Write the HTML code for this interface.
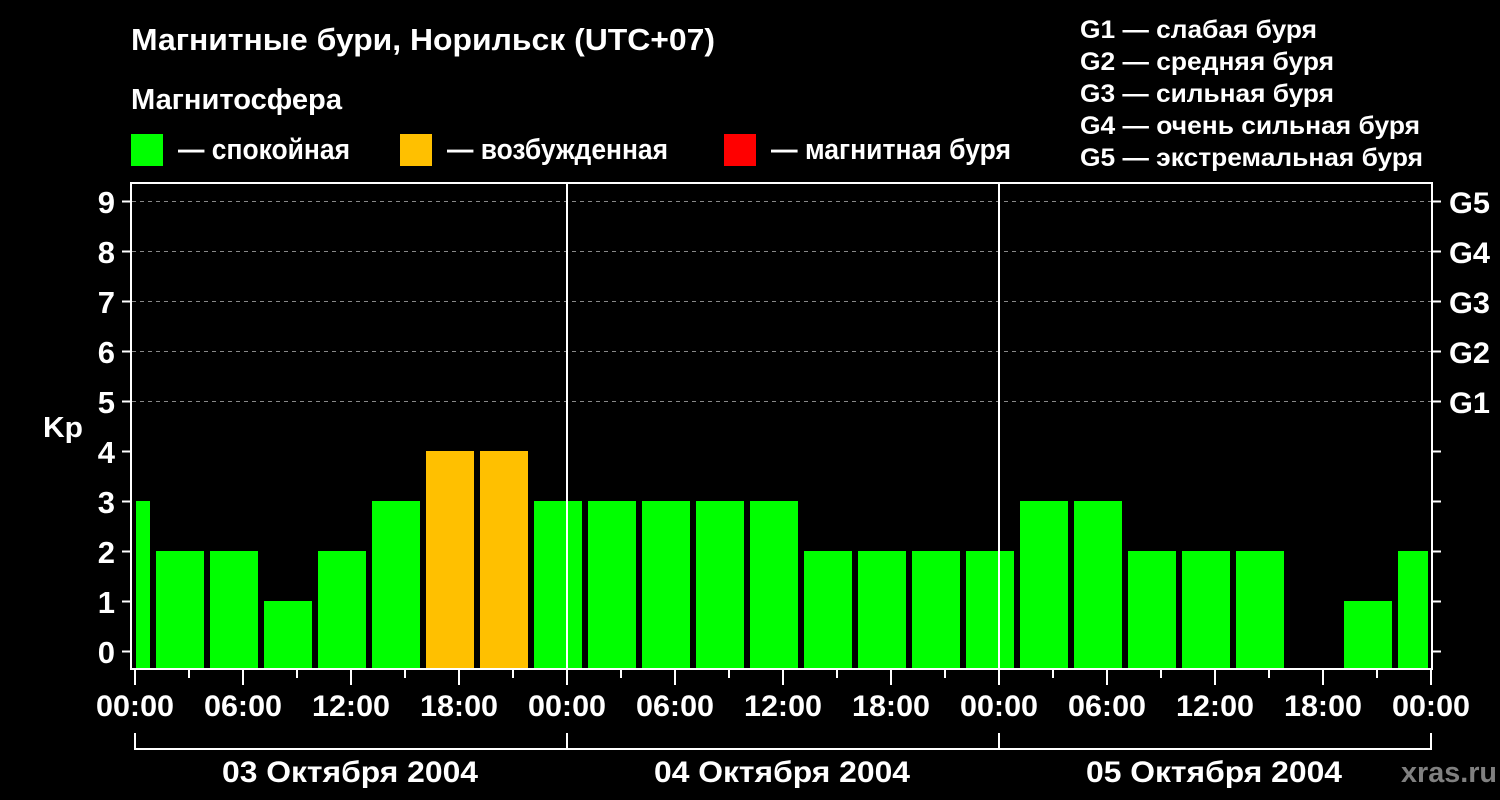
<!DOCTYPE html>
<html><head><meta charset="utf-8"><style>
html,body{margin:0;padding:0;background:#000;}
svg{display:block;}
text{font-family:"Liberation Sans",sans-serif;font-weight:bold;fill:#fff;}
</style></head><body>
<svg width="1500" height="800" viewBox="0 0 1500 800" xmlns="http://www.w3.org/2000/svg">
<rect width="1500" height="800" fill="#000"/>
<text x="131" y="50" font-size="31" textLength="584" lengthAdjust="spacingAndGlyphs">Магнитные бури, Норильск (UTC+07)</text>
<text x="131" y="109" font-size="29" textLength="211" lengthAdjust="spacingAndGlyphs">Магнитосфера</text>
<rect x="131" y="134" width="32" height="32" fill="#00ff00"/>
<rect x="400" y="134" width="32" height="32" fill="#ffc000"/>
<rect x="724" y="134" width="32" height="32" fill="#ff0000"/>
<text x="178" y="159" font-size="29" textLength="172" lengthAdjust="spacingAndGlyphs">— спокойная</text>
<text x="447" y="159" font-size="29" textLength="221" lengthAdjust="spacingAndGlyphs">— возбужденная</text>
<text x="771" y="159" font-size="29" textLength="240" lengthAdjust="spacingAndGlyphs">— магнитная буря</text>
<g font-size="25">
<text x="1080" y="38" textLength="237" lengthAdjust="spacingAndGlyphs">G1 — слабая буря</text>
<text x="1080" y="70" textLength="254" lengthAdjust="spacingAndGlyphs">G2 — средняя буря</text>
<text x="1080" y="102" textLength="254" lengthAdjust="spacingAndGlyphs">G3 — сильная буря</text>
<text x="1080" y="134" textLength="340" lengthAdjust="spacingAndGlyphs">G4 — очень сильная буря</text>
<text x="1080" y="166" textLength="343" lengthAdjust="spacingAndGlyphs">G5 — экстремальная буря</text>
</g>
<g stroke="#888" stroke-width="1" stroke-dasharray="4,4">
<line x1="132" y1="201.5" x2="1431" y2="201.5"/>
<line x1="132" y1="251.5" x2="1431" y2="251.5"/>
<line x1="132" y1="301.5" x2="1431" y2="301.5"/>
<line x1="132" y1="351.5" x2="1431" y2="351.5"/>
<line x1="132" y1="401.5" x2="1431" y2="401.5"/>
</g>
<g fill="#00ff00">
<rect x="136" y="501" width="14" height="167"/>
<rect x="156" y="551" width="48" height="117"/>
<rect x="210" y="551" width="48" height="117"/>
<rect x="264" y="601" width="48" height="67"/>
<rect x="318" y="551" width="48" height="117"/>
<rect x="372" y="501" width="48" height="167"/>
<rect x="426" y="451" width="48" height="217" fill="#ffc000"/>
<rect x="480" y="451" width="48" height="217" fill="#ffc000"/>
<rect x="534" y="501" width="48" height="167"/>
<rect x="588" y="501" width="48" height="167"/>
<rect x="642" y="501" width="48" height="167"/>
<rect x="696" y="501" width="48" height="167"/>
<rect x="750" y="501" width="48" height="167"/>
<rect x="804" y="551" width="48" height="117"/>
<rect x="858" y="551" width="48" height="117"/>
<rect x="912" y="551" width="48" height="117"/>
<rect x="966" y="551" width="48" height="117"/>
<rect x="1020" y="501" width="48" height="167"/>
<rect x="1074" y="501" width="48" height="167"/>
<rect x="1128" y="551" width="48" height="117"/>
<rect x="1182" y="551" width="48" height="117"/>
<rect x="1236" y="551" width="48" height="117"/>
<rect x="1344" y="601" width="48" height="67"/>
<rect x="1398" y="551" width="30" height="117"/>
</g>
<g stroke="#fff" stroke-width="2" fill="none">
<path d="M131 669 V183 H1432 V669 Z"/>
<line x1="567" y1="183" x2="567" y2="668"/>
<line x1="999" y1="183" x2="999" y2="668"/>
<path d="M122 201.5H131M122 251.5H131M122 301.5H131M122 351.5H131M122 401.5H131M122 451.5H131M122 501.5H131M122 551.5H131M122 601.5H131M122 651.5H131"/>
<path d="M1432 201.5H1441M1432 251.5H1441M1432 301.5H1441M1432 351.5H1441M1432 401.5H1441M1432 451.5H1441M1432 501.5H1441M1432 551.5H1441M1432 601.5H1441M1432 651.5H1441"/>
<path d="M135 669V685M243 669V685M351 669V685M459 669V685M567 669V685M675 669V685M783 669V685M891 669V685M999 669V685M1107 669V685M1215 669V685M1323 669V685M1431 669V685"/>
<path d="M189 669V678M297 669V678M405 669V678M513 669V678M621 669V678M729 669V678M837 669V678M945 669V678M1053 669V678M1161 669V678M1269 669V678M1377 669V678"/>
<path d="M135 733V749H1431V733M567 733V749M999 733V749"/>
</g>
<g font-size="31" text-anchor="end">
<text x="115" y="213">9</text><text x="115" y="263">8</text><text x="115" y="313">7</text><text x="115" y="363">6</text><text x="115" y="413">5</text>
<text x="115" y="463">4</text><text x="115" y="513">3</text><text x="115" y="563">2</text><text x="115" y="613">1</text><text x="115" y="663">0</text>
</g>
<text x="43" y="437" font-size="29" textLength="40" lengthAdjust="spacingAndGlyphs">Kp</text>
<g font-size="30">
<text x="1449" y="213" textLength="41" lengthAdjust="spacingAndGlyphs">G5</text><text x="1449" y="263" textLength="41" lengthAdjust="spacingAndGlyphs">G4</text><text x="1449" y="313" textLength="41" lengthAdjust="spacingAndGlyphs">G3</text><text x="1449" y="363" textLength="41" lengthAdjust="spacingAndGlyphs">G2</text><text x="1449" y="413" textLength="41" lengthAdjust="spacingAndGlyphs">G1</text>
</g>
<g font-size="30">
<text x="96" y="716" textLength="78" lengthAdjust="spacingAndGlyphs">00:00</text><text x="204" y="716" textLength="78" lengthAdjust="spacingAndGlyphs">06:00</text><text x="312" y="716" textLength="78" lengthAdjust="spacingAndGlyphs">12:00</text><text x="420" y="716" textLength="78" lengthAdjust="spacingAndGlyphs">18:00</text>
<text x="528" y="716" textLength="78" lengthAdjust="spacingAndGlyphs">00:00</text><text x="636" y="716" textLength="78" lengthAdjust="spacingAndGlyphs">06:00</text><text x="744" y="716" textLength="78" lengthAdjust="spacingAndGlyphs">12:00</text><text x="852" y="716" textLength="78" lengthAdjust="spacingAndGlyphs">18:00</text>
<text x="960" y="716" textLength="78" lengthAdjust="spacingAndGlyphs">00:00</text><text x="1068" y="716" textLength="78" lengthAdjust="spacingAndGlyphs">06:00</text><text x="1176" y="716" textLength="78" lengthAdjust="spacingAndGlyphs">12:00</text><text x="1284" y="716" textLength="78" lengthAdjust="spacingAndGlyphs">18:00</text>
<text x="1392" y="716" textLength="78" lengthAdjust="spacingAndGlyphs">00:00</text>
<text x="222" y="782" textLength="256" lengthAdjust="spacingAndGlyphs">03 Октября 2004</text>
<text x="654" y="782" textLength="256" lengthAdjust="spacingAndGlyphs">04 Октября 2004</text>
<text x="1086" y="782" textLength="256" lengthAdjust="spacingAndGlyphs">05 Октября 2004</text>
</g>
<text x="1401" y="782" font-size="29" style="fill:#808080" textLength="96" lengthAdjust="spacingAndGlyphs">xras.ru</text>
</svg>
</body></html>
